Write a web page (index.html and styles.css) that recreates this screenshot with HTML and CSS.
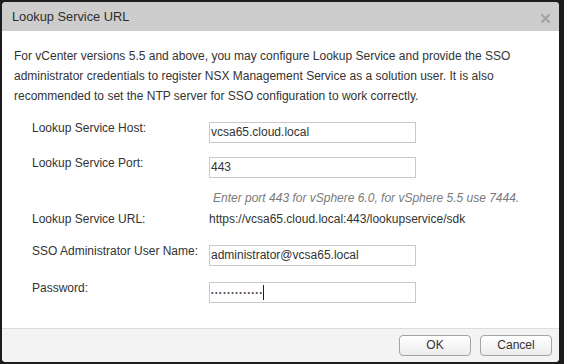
FILE: index.html
```html
<!DOCTYPE html>
<html>
<head>
<meta charset="utf-8">
<title>Lookup Service URL</title>
<link rel="stylesheet" href="styles.css">
</head>
<body>
<div class="dialog">
  <div class="header">
    <span class="title">Lookup Service URL</span>
    <svg class="close" width="9" height="9" viewBox="0 0 9 9"><path d="M1 1 L8 8 M8 1 L1 8" stroke="#a3a3a3" stroke-width="2.2" stroke-linecap="square"/></svg>
  </div>
  <div class="body">
    <p class="intro">For vCenter versions 5.5 and above, you may configure Lookup Service and provide the SSO administrator credentials to register NSX Management Service as a solution user. It is also recommended to set the NTP server for SSO configuration to work correctly.</p>
    <div class="form">
      <div class="row">
        <label class="label">Lookup Service Host:</label>
        <div class="input">vcsa65.cloud.local</div>
      </div>
      <div class="row row-port">
        <label class="label">Lookup Service Port:</label>
        <div class="input">443</div>
      </div>
      <div class="row row-hint">
        <span class="label"></span>
        <span class="hint">Enter port 443 for vSphere 6.0, for vSphere 5.5 use 7444.</span>
      </div>
      <div class="row row-url">
        <label class="label">Lookup Service URL:</label>
        <span class="value">https://vcsa65.cloud.local:443/lookupservice/sdk</span>
      </div>
      <div class="row row-sso">
        <label class="label">SSO Administrator User Name:</label>
        <div class="input">administrator@vcsa65.local</div>
      </div>
      <div class="row row-pass">
        <label class="label">Password:</label>
        <div class="input password"><span class="dots">•••••••••••••</span><span class="caret"></span></div>
      </div>
    </div>
  </div>
  <div class="footer">
    <button class="btn">OK</button>
    <button class="btn">Cancel</button>
  </div>
</div>
</body>
</html>
```
FILE: styles.css
```css
html, body {
  margin: 0;
  padding: 0;
  background: #1c1c1c;
  width: 564px;
  height: 364px;
  overflow: hidden;
}
body {
  font-family: "Liberation Sans", Arial, sans-serif;
  font-size: 12px;
  color: #333;
}
.dialog {
  margin: 2px 5px 2px 2px;
  width: 557px;
  height: 360px;
  background: #fff;
  border-radius: 4px;
  display: flex;
  flex-direction: column;
  overflow: hidden;
}
.header {
  height: 29px;
  background: #cdcdcd;
  display: flex;
  align-items: center;
  justify-content: space-between;
  padding: 0 9px 0 10px;
  box-sizing: border-box;
  flex: none;
}
.title {
  font-size: 12.8px;
  line-height: 15px;
  color: #2e2e2e;
  margin-top: -1px;
}
.close {
  display: block;
  margin-top: 3px;
}
.body {
  flex: 1;
  padding: 15px 12px 0 12px;
}
.intro {
  margin: 0;
  line-height: 20px;
  color: #333;
}
.form {
  margin: 16px 0 0 18px;
  display: flex;
  flex-direction: column;
}
.row {
  display: flex;
  align-items: flex-start;
  line-height: 15px;
}
.label {
  width: 177px;
  flex: none;
  margin-top: -1px;
  color: #333;
}
.input {
  width: 207px;
  height: 21px;
  box-sizing: border-box;
  border: 1px solid #c9c9c9;
  padding: 2px 1px;
  line-height: 15px;
  color: #333;
  background: #fff;
  white-space: nowrap;
  display: flex;
  align-items: center;
}
.row-port { margin-top: 14px; }
.row-hint { margin-top: 13px; }
.row-hint .label { margin-top: 0; }
.hint {
  font-style: italic;
  color: #7a7a7a;
  padding-left: 4px;
}
.row-url { margin-top: 6px; }
.row-url .label { margin-top: 0; }
.value { color: #333; }
.row-sso { margin-top: 18px; }
.row-pass { margin-top: 16px; }
.dots {
  font-size: 7px;
  letter-spacing: 1.6px;
  color: #444;
  line-height: 15px;
}
.caret {
  display: inline-block;
  width: 1px;
  height: 15px;
  background: #222;
  margin-left: -1px;
}
.footer {
  flex: none;
  height: 34px;
  box-sizing: border-box;
  border-top: 1px solid #dcdcdc;
  background: #f3f3f3;
  display: flex;
  justify-content: flex-end;
  align-items: flex-start;
  gap: 9px;
  padding: 6px 7px 0 0;
}
.btn {
  width: 72px;
  height: 21px;
  box-sizing: border-box;
  border: 1px solid #a3a3a3;
  border-radius: 4px;
  background: linear-gradient(#ffffff, #ececec);
  font-family: "Liberation Sans", Arial, sans-serif;
  font-size: 12px;
  color: #333;
  padding: 0;
  line-height: 19px;
}
```
